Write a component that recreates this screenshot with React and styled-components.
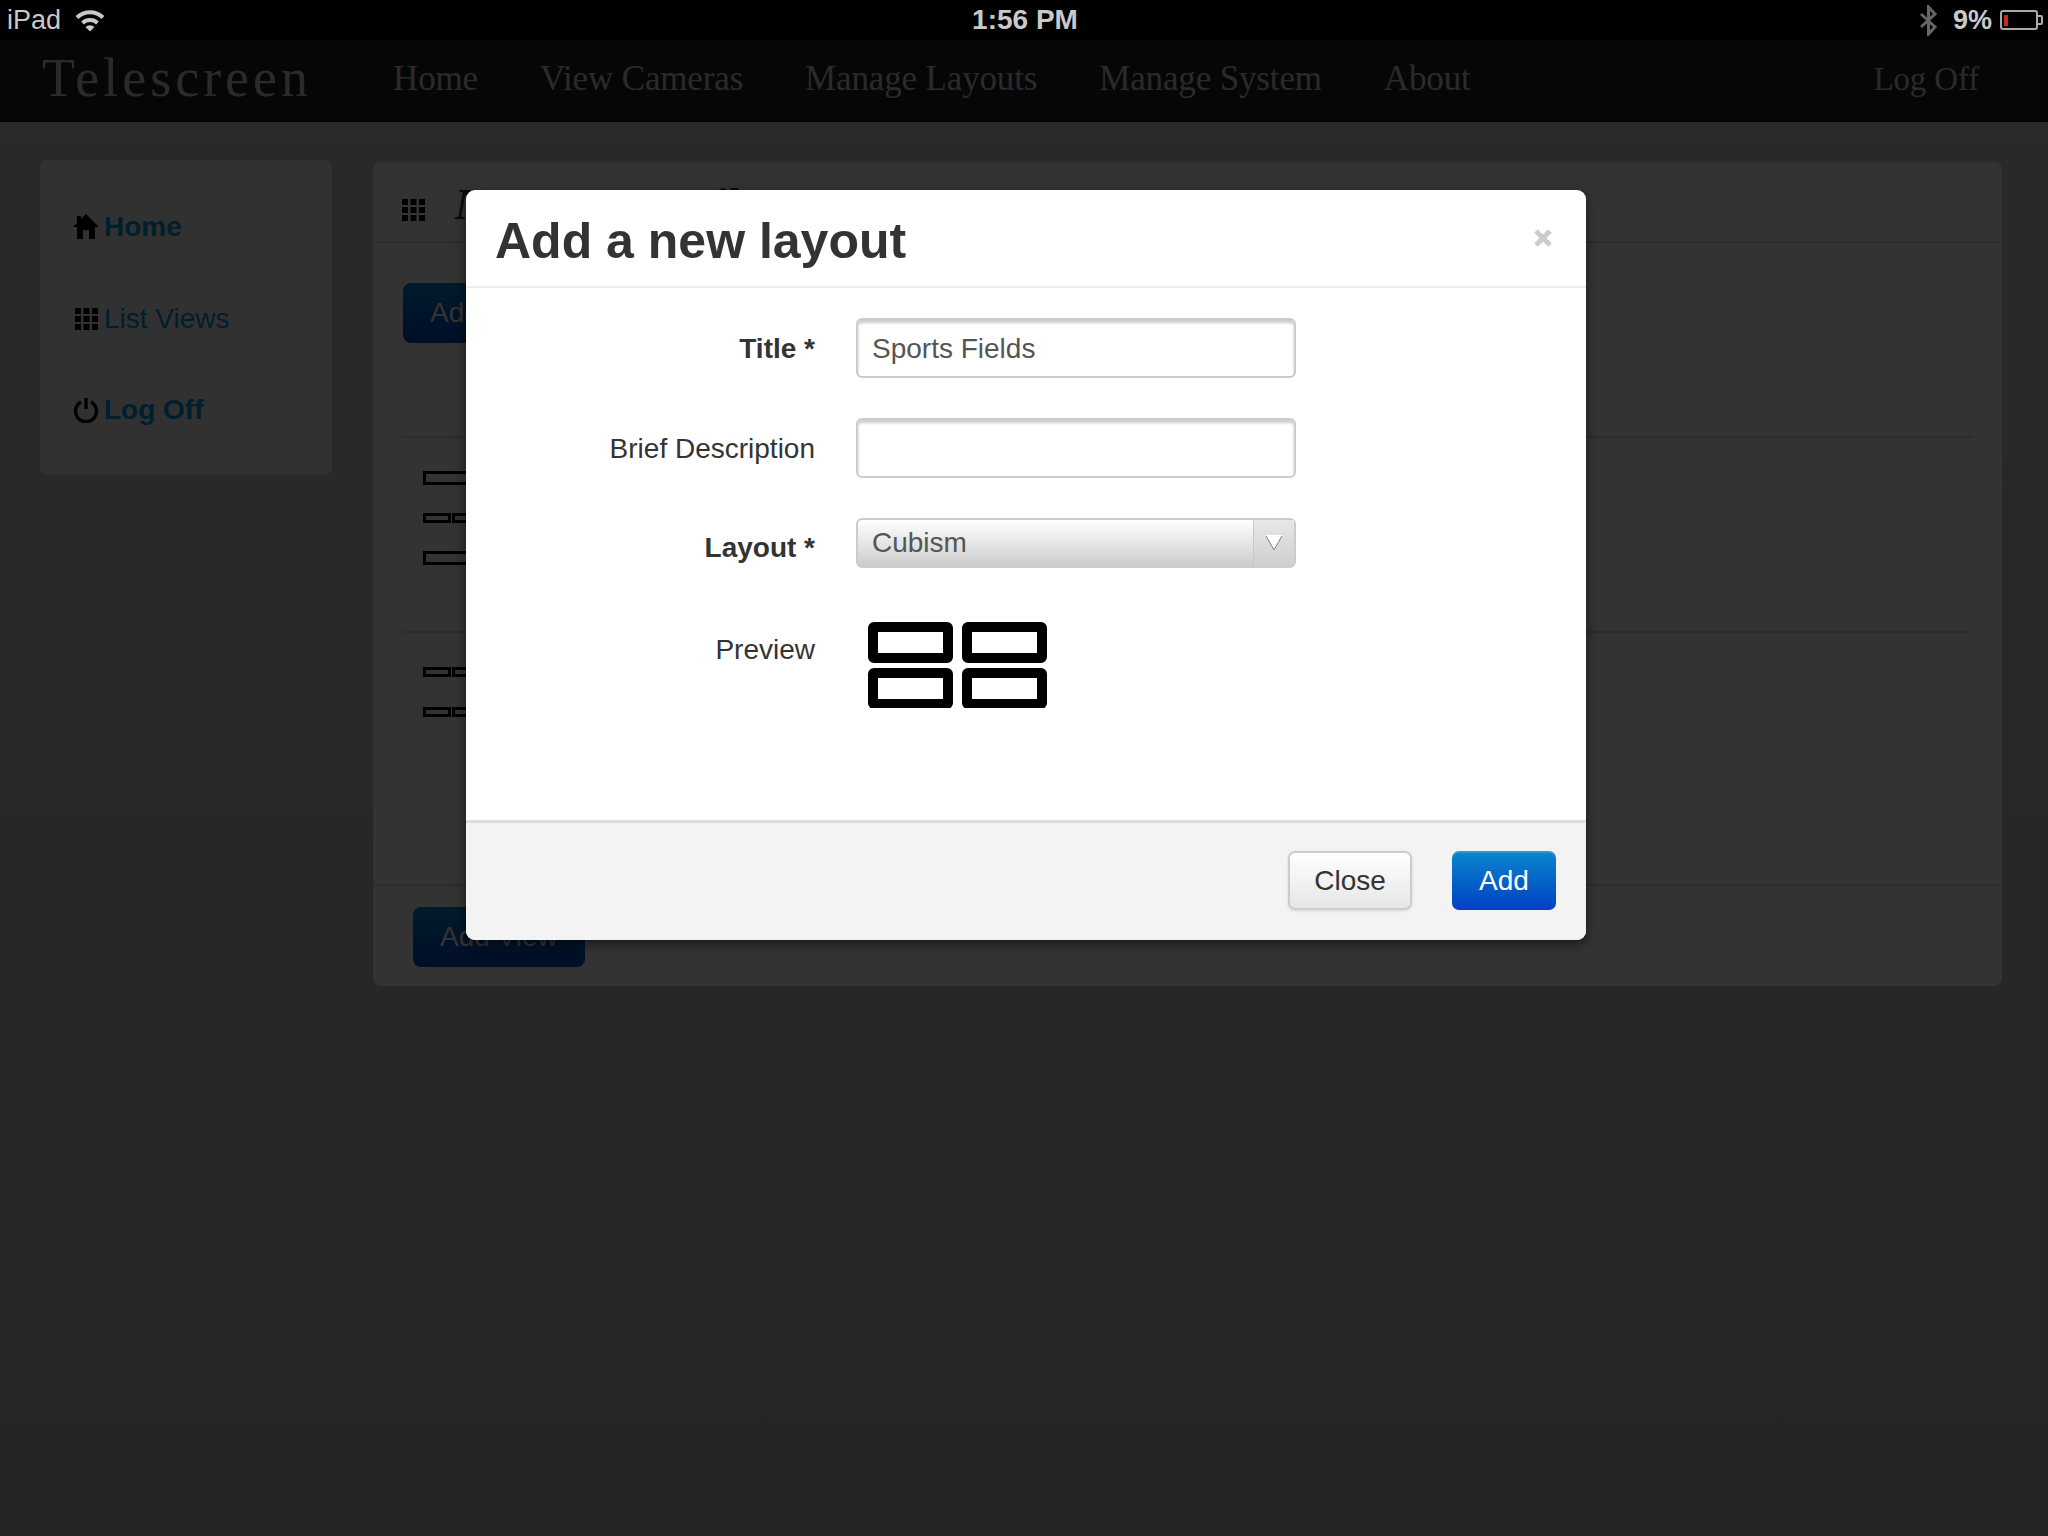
import React from "react";
import styled, { createGlobalStyle } from "styled-components";

const GlobalStyle = createGlobalStyle`
  html, body {
    margin: 0;
    padding: 0;
    background: #000;
  }
  body {
    font-family: "Liberation Sans", Arial, sans-serif;
    font-size: 28px;
    color: #333;
  }
  * { box-sizing: border-box; }
`;

const Screen = styled.div`
  position: relative;
  width: 2048px;
  height: 1536px;
  overflow: hidden;
  display: flex;
  flex-direction: column;
`;

/* ios status bar */
const StatusBar = styled.div`
  height: 40px;
  background: #000;
  color: #c9c9c9;
  display: grid;
  grid-template-columns: 1fr auto 1fr;
  align-items: center;
  padding: 0 5px 0 7px;
  position: relative;
  z-index: 3;
`;

const StatusLeft = styled.div`
  display: flex;
  align-items: center;
  gap: 14px;
  font-size: 27px;
`;

const StatusTime = styled.div`
  font-size: 28px;
  font-weight: bold;
`;

const StatusRight = styled.div`
  display: flex;
  align-items: center;
  justify-content: flex-end;
  font-size: 27px;
  font-weight: bold;
`;

const BatteryPct = styled.span`
  margin: 0 8px 0 16px;
`;

/* page underneath the backdrop */
const Page = styled.div`
  flex: 1;
  display: flex;
  flex-direction: column;
  background: linear-gradient(180deg, #d0d0d0 0%, #bababa 100%);
`;

const Navbar = styled.nav`
  height: 82px;
  background: #1f1f1f;
  display: flex;
  align-items: center;
  padding: 0 69px 4px 42px;
  font-family: "Liberation Serif", serif;
  color: #d0d0d0;
`;

const Brand = styled.div`
  font-size: 54px;
  letter-spacing: 4px;
  margin: 0 81px 2px 0;
`;

const NavLinks = styled.div`
  display: flex;
  gap: 62px;
  font-size: 35px;
`;

const NavLink = styled.a`
  display: block;
  white-space: nowrap;
  letter-spacing: -0.15px;
`;

const LogOff = styled(NavLink)`
  margin-left: auto;
  font-size: 33px;
`;

const Content = styled.div`
  display: flex;
  align-items: flex-start;
  gap: 41px;
  padding: 38px 45px 0 40px;
`;

const Sidebar = styled.aside`
  width: 292px;
  height: 315px;
  background: #f5f5f5;
  border-radius: 8px;
  padding: 47px 0 0 32px;
  display: flex;
  flex-direction: column;
  gap: 51.5px;
`;

const SideItem = styled.a`
  display: flex;
  align-items: center;
  gap: 4px;
  height: 40px;
  color: #0098e0;
  font-size: 28px;
  font-weight: ${(p) => (p.$bold ? "bold" : "normal")};
`;

const IconSlot = styled.span`
  width: 28px;
  display: flex;
  justify-content: center;
  color: #000;
`;

const Panel = styled.section`
  width: 1629px;
  height: 824px;
  margin-top: 2px;
  background: #fff;
  border-radius: 8px;
  display: flex;
  flex-direction: column;
`;

const PanelHeader = styled.header`
  height: 81px;
  display: flex;
  align-items: center;
  gap: 28px;
  padding: 16px 0 0 26px;
  border-bottom: 2px solid #ddd;
`;

const PanelTitle = styled.h2`
  margin: 0 0 10px;
  font-family: "Liberation Serif", serif;
  font-style: italic;
  font-weight: bold;
  font-size: 44px;
`;

const PanelBody = styled.div`
  flex: 1;
  padding: 40px 30px 0;
  display: flex;
  flex-direction: column;
  align-items: flex-start;
`;

const BlueButton = styled.button`
  display: block;
  height: 60px;
  padding: 0 27px;
  border: 0;
  border-radius: 8px;
  background: linear-gradient(180deg, #0088cc, #0044cc);
  color: #fff;
  font: 28px "Liberation Sans", Arial, sans-serif;
`;

const ListRow = styled.div`
  height: ${(p) => p.$height}px;
  margin: 0 30px;
  padding: ${(p) => p.$top}px 0 0 20px;
  border-top: 2px solid #ddd;
  display: flex;
  flex-direction: column;
  gap: ${(p) => p.$gap}px;
  align-items: flex-start;
`;

const PanelFooter = styled.footer`
  height: 102px;
  padding: 21px 0 0 40px;
  border-top: 2px solid #ddd;
`;

/* modal */
const Backdrop = styled.div`
  position: absolute;
  inset: 40px 0 0 0;
  background: rgba(0, 0, 0, 0.8);
  z-index: 1;
`;

const Modal = styled.div`
  position: absolute;
  left: 466px;
  top: 190px;
  width: 1120px;
  height: 750px;
  z-index: 2;
  background: #fff;
  border-radius: 9px;
  box-shadow: 0 4px 12px rgba(0, 0, 0, 0.5);
  display: flex;
  flex-direction: column;
  overflow: hidden;
`;

const ModalHeader = styled.header`
  height: 98px;
  flex: none;
  display: flex;
  align-items: center;
  justify-content: space-between;
  padding: 6px 34px 0 29px;
  border-bottom: 2px solid #eee;
`;

const ModalTitle = styled.h3`
  margin: 0;
  font-size: 50px;
  font-weight: bold;
  color: #333;
`;

const CloseX = styled.span`
  display: flex;
  color: #ccc;
  margin-bottom: 6px;
`;

const ModalBody = styled.div`
  flex: 1;
  padding: 30px 0 0;
  display: flex;
  flex-direction: column;
`;

const FormRow = styled.div`
  display: grid;
  grid-template-columns: 349px 440px;
  column-gap: 41px;
  align-items: start;
  margin-bottom: ${(p) => p.$mb}px;
`;

const Label = styled.label`
  text-align: right;
  padding-top: ${(p) => p.$pt}px;
  font-size: 28px;
  line-height: 32px;
  font-weight: ${(p) => (p.$required ? "bold" : "normal")};
  color: #333;
`;

const Input = styled.input`
  display: block;
  width: 440px;
  height: 60px;
  padding: 1px 14px 0;
  border: 2px solid #ccc;
  border-radius: 6px;
  box-shadow: inset 0 3px 3px rgba(0, 0, 0, 0.2);
  background: #fff;
  color: #555;
  font: 28px "Liberation Sans", Arial, sans-serif;
  outline: none;
`;

const SelectBox = styled.div`
  width: 440px;
  height: 50px;
  border: 2px solid #ccc;
  border-radius: 6px;
  background: linear-gradient(180deg, #fff, #ccc);
  color: #555;
  font-size: 28px;
  display: flex;
  align-items: center;
  justify-content: space-between;
  padding-left: 14px;
`;

const SelectArrow = styled.span`
  width: 41px;
  height: 100%;
  border-left: 1px solid #c8c8c8;
  background: linear-gradient(180deg, #e8e8e8, #cfcfcf);
  display: flex;
  align-items: center;
  justify-content: center;
`;

const PreviewSlot = styled.div`
  padding-left: 12px;
  display: flex;
`;

const ModalFooter = styled.footer`
  height: 120px;
  flex: none;
  background: #f3f3f3;
  border-top: 3px solid #ddd;
  display: flex;
  justify-content: flex-end;
  align-items: flex-start;
  gap: 40px;
  padding: 28px 30px 0 0;
`;

const FooterButton = styled.button`
  height: 59px;
  width: ${(p) => p.$width}px;
  border-radius: 7px;
  font: 28px "Liberation Sans", Arial, sans-serif;
  padding: 0;
  border: ${(p) => (p.$primary ? "0" : "2px solid #ccc")};
  color: ${(p) => (p.$primary ? "#fff" : "#333")};
  background: ${(p) =>
    p.$primary
      ? "linear-gradient(180deg, #0a86cc, #0040c4)"
      : "linear-gradient(180deg, #fff, #e6e6e6)"};
  box-shadow: ${(p) =>
    p.$primary
      ? "inset 0 2px 0 rgba(255,255,255,.15)"
      : "0 1px 3px rgba(0,0,0,.12)"};
`;

const WifiIcon = () => (
  <svg width="30" height="24" viewBox="0 0 30 24">
    <g fill="none" stroke="#c9c9c9" strokeWidth="4">
      <path d="M2 9.5 A 18.5 18.5 0 0 1 28 9.5" />
      <path d="M7.5 15 A 11 11 0 0 1 22.5 15" />
    </g>
    <path d="M10.5 19 A 6.5 6.5 0 0 1 19.5 19 L15 23.5 Z" fill="#c9c9c9" />
  </svg>
);

const BluetoothIcon = () => (
  <svg width="17" height="31" viewBox="0 0 17 31">
    <path d="M1 9 L15 22 L8.5 29 V2 L15 9 L1 22" fill="none" stroke="#666" strokeWidth="3" />
  </svg>
);

const BatteryIcon = () => (
  <svg width="43" height="20" viewBox="0 0 43 20">
    <rect x="1" y="1" width="36" height="18" rx="2" fill="none" stroke="#aaa" strokeWidth="2" />
    <rect x="4" y="5" width="4" height="11" fill="#c8281e" />
    <path d="M38 6 h3 a1 1 0 0 1 1 1 v6 a1 1 0 0 1 -1 1 h-3" fill="none" stroke="#aaa" strokeWidth="2" />
  </svg>
);

const HomeIcon = () => (
  <svg width="26" height="26" viewBox="0 0 26 26">
    <path d="M13 0 L26 13 H22 V25 H16 V16 H10 V25 H4 V13 H0 L4 9 V2 H8 V5 Z" fill="currentColor" />
  </svg>
);

const GridIcon = () => (
  <svg width="23" height="22" viewBox="0 0 23 22">
    {[0, 8, 16].map((y) =>
      [0, 8.5, 17].map((x) => (
        <rect key={`${x}-${y}`} x={x} y={y} width="6" height="6" fill="currentColor" />
      ))
    )}
  </svg>
);

const PowerIcon = () => (
  <svg width="26" height="26" viewBox="0 0 26 26">
    <path
      d="M8 5 A 10.5 10.5 0 1 0 18 5 M13 1 V12"
      fill="none"
      stroke="currentColor"
      strokeWidth="3.4"
    />
  </svg>
);

const CloseIcon = () => (
  <svg width="18" height="18" viewBox="0 0 18 18">
    <path d="M2 2 L16 16 M16 2 L2 16" stroke="currentColor" strokeWidth="5" />
  </svg>
);

const ArrowIcon = () => (
  <svg width="18" height="18" viewBox="0 0 18 18">
    <path d="M0 1 H18 L9 17 Z" fill="#fff" />
    <path d="M1 2 L9 16 L17 2" fill="none" stroke="#777" strokeWidth="1" />
  </svg>
);

const BarThumb = () => (
  <svg width="60" height="14" viewBox="0 0 60 14">
    <rect x="1.5" y="1.5" width="57" height="11" fill="none" stroke="#000" strokeWidth="3" />
  </svg>
);

const PairThumb = () => (
  <svg width="60" height="10" viewBox="0 0 60 10">
    <rect x="1.5" y="1.5" width="25" height="7" fill="none" stroke="#000" strokeWidth="3" />
    <rect x="30.5" y="1.5" width="25" height="7" fill="none" stroke="#000" strokeWidth="3" />
  </svg>
);

const CubismPreview = () => (
  <svg width="179" height="86" viewBox="0 0 179 86">
    {[0, 94].map((x) =>
      [0, 46].map((y) => (
        <rect
          key={`${x}-${y}`}
          x={x + 5}
          y={y + 5}
          width="75"
          height="31"
          rx="1"
          fill="#fff"
          stroke="#000"
          strokeWidth="10"
        />
      ))
    )}
  </svg>
);

export default function App() {
  return (
    <Screen>
      <GlobalStyle />
      <StatusBar>
        <StatusLeft>
          <span>iPad</span>
          <WifiIcon />
        </StatusLeft>
        <StatusTime>1:56 PM</StatusTime>
        <StatusRight>
          <BluetoothIcon />
          <BatteryPct>9%</BatteryPct>
          <BatteryIcon />
        </StatusRight>
      </StatusBar>

      <Page>
        <Navbar>
          <Brand>Telescreen</Brand>
          <NavLinks>
            <NavLink>Home</NavLink>
            <NavLink>View Cameras</NavLink>
            <NavLink>Manage Layouts</NavLink>
            <NavLink>Manage System</NavLink>
            <NavLink>About</NavLink>
          </NavLinks>
          <LogOff>Log Off</LogOff>
        </Navbar>

        <Content>
          <Sidebar>
            <SideItem $bold>
              <IconSlot><HomeIcon /></IconSlot>
              Home
            </SideItem>
            <SideItem>
              <IconSlot><GridIcon /></IconSlot>
              List Views
            </SideItem>
            <SideItem $bold>
              <IconSlot><PowerIcon /></IconSlot>
              Log Off
            </SideItem>
          </Sidebar>

          <Panel>
            <PanelHeader>
              <IconSlot><GridIcon /></IconSlot>
              <PanelTitle>Manage My Files</PanelTitle>
            </PanelHeader>
            <PanelBody>
              <BlueButton>Add Layout</BlueButton>
            </PanelBody>
            <ListRow $height={195} $top={33} $gap={28}>
              <BarThumb />
              <PairThumb />
              <BarThumb />
            </ListRow>
            <ListRow $height={253} $top={34} $gap={30}>
              <PairThumb />
              <PairThumb />
            </ListRow>
            <PanelFooter>
              <BlueButton>Add View</BlueButton>
            </PanelFooter>
          </Panel>
        </Content>
      </Page>

      <Backdrop />

      <Modal>
        <ModalHeader>
          <ModalTitle>Add a new layout</ModalTitle>
          <CloseX><CloseIcon /></CloseX>
        </ModalHeader>
        <ModalBody>
          <FormRow $mb={40}>
            <Label $required $pt={15}>Title *</Label>
            <Input defaultValue="Sports Fields" />
          </FormRow>
          <FormRow $mb={40}>
            <Label $pt={15}>Brief Description</Label>
            <Input />
          </FormRow>
          <FormRow $mb={54}>
            <Label $required $pt={14}>Layout *</Label>
            <SelectBox>
              Cubism
              <SelectArrow><ArrowIcon /></SelectArrow>
            </SelectBox>
          </FormRow>
          <FormRow $mb={0}>
            <Label $pt={12}>Preview</Label>
            <PreviewSlot><CubismPreview /></PreviewSlot>
          </FormRow>
        </ModalBody>
        <ModalFooter>
          <FooterButton $width={124}>Close</FooterButton>
          <FooterButton $primary $width={104}>Add</FooterButton>
        </ModalFooter>
      </Modal>
    </Screen>
  );
}
